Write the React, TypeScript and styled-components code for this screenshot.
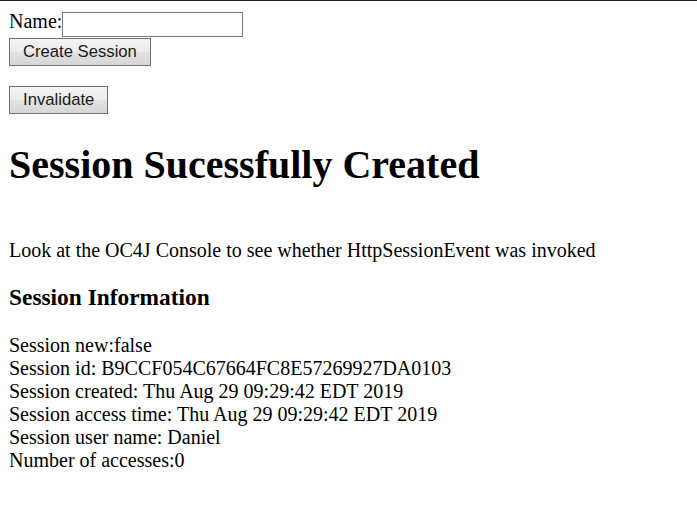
import React from "react";
import styled, { createGlobalStyle } from "styled-components";

const Global = createGlobalStyle`
  html {
    border-top: 1px solid #1f1f1f;
    background: #ffffff;
  }
  body {
    margin: 9px 9px;
    font-family: "Liberation Serif", "Times New Roman", serif;
    font-size: 20px;
    line-height: 23px;
    color: #000000;
  }
`;

const Form = styled.form`
  display: block;
  margin: 0 0 20px;
`;

const NameLine = styled.div`
  display: flex;
  align-items: baseline;
  height: 28px;
`;

const TextInput = styled.input`
  box-sizing: border-box;
  width: 181px;
  height: 25px;
  margin: 0 0 1px;
  padding: 2px 3px;
  border: 1px solid #7a7a7a;
  outline: none;
  background: #ffffff;
  font-family: "Liberation Sans", Arial, sans-serif;
  font-size: 16.67px;
  align-self: flex-end;
`;

const Button = styled.button`
  box-sizing: border-box;
  display: block;
  height: 28px;
  margin: 0;
  padding: 0 13px;
  border: 1px solid #707070;
  background: linear-gradient(#f3f3f3 0%, #ececec 50%, #e2e2e2 51%, #d6d6d6 100%);
  font-family: "Liberation Sans", Arial, sans-serif;
  font-size: 16.67px;
  color: #1a1a1a;
  line-height: 26px;
  border-radius: 0;
`;

const Title = styled.h1`
  font-size: 40px;
  line-height: 46px;
  font-weight: bold;
  margin: 28px 0 51px;
`;

const Lead = styled.p`
  margin: 0 0 20px;
`;

const SubTitle = styled.h3`
  font-size: 23.4px;
  line-height: 27px;
  font-weight: bold;
  margin: 22px 0 23px;
`;

const InfoList = styled.div`
  display: flex;
  flex-direction: column;
`;

const InfoLine = styled.div`
  line-height: 23px;
  white-space: nowrap;
`;

const info = [
  "Session new:false",
  "Session id: B9CCF054C67664FC8E57269927DA0103",
  "Session created: Thu Aug 29 09:29:42 EDT 2019",
  "Session access time: Thu Aug 29 09:29:42 EDT 2019",
  "Session user name: Daniel",
  "Number of accesses:0",
];

export default function App() {
  return (
    <>
      <Global />
      <Form onSubmit={(e) => e.preventDefault()}>
        <NameLine>
          <span>Name:</span>
          <TextInput type="text" />
        </NameLine>
        <Button type="submit">Create Session</Button>
      </Form>
      <Form onSubmit={(e) => e.preventDefault()}>
        <Button type="submit">Invalidate</Button>
      </Form>
      <Title>Session Sucessfully Created</Title>
      <Lead>Look at the OC4J Console to see whether HttpSessionEvent was invoked</Lead>
      <SubTitle>Session Information</SubTitle>
      <InfoList>
        {info.map((t) => (
          <InfoLine key={t}>{t}</InfoLine>
        ))}
      </InfoList>
    </>
  );
}
